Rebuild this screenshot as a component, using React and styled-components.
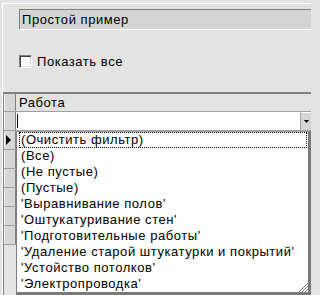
import React from "react";
import styled, { createGlobalStyle } from "styled-components";

const Global = createGlobalStyle`
  html, body { margin: 0; padding: 0; background: #e3e3e3; }
  body {
    font-family: "Liberation Sans", Arial, sans-serif;
    font-size: 13px;
    letter-spacing: 0.55px;
    color: #000;
  }
`;

const Screen = styled.div`
  position: relative;
  width: 311px;
  height: 295px;
  overflow: hidden;
  background: #e3e3e3;
  padding-top: 3px;
  padding-left: 2px;
  box-sizing: border-box;
`;

const Panel = styled.div`
  border-top: 1px solid #ffffff;
  border-left: 1px solid #ffffff;
  height: 100%;
  box-sizing: border-box;
  display: flex;
  flex-direction: column;
`;

const TitleBox = styled.div`
  margin: 5px 0 0 16px;
  height: 21px;
  box-sizing: border-box;
  border-top: 1px solid #808080;
  border-left: 1px solid #808080;
  border-bottom: 1px solid #ffffff;
  background: #d4d4d4;
  padding-left: 2px;
  line-height: 19px;
  white-space: nowrap;
`;

const CheckRow = styled.label`
  margin: 25px 0 0 16px;
  height: 13px;
  display: flex;
  align-items: center;
  gap: 5px;
  line-height: 13px;
`;

const CheckBox = styled.span`
  width: 13px;
  height: 13px;
  box-sizing: border-box;
  background: #ffffff;
  border-top: 1px solid #808080;
  border-left: 1px solid #808080;
  border-right: 1px solid #ffffff;
  border-bottom: 1px solid #ffffff;
  box-shadow: inset 1px 1px 0 #404040, inset -1px -1px 0 #dcdcdc;
`;

const Grid = styled.div`
  margin-top: 24px;
  flex: 1;
  border-top: 2px solid #808080;
  border-left: 1px solid #808080;
  display: flex;
  flex-direction: column;
`;

const Row = styled.div`
  display: flex;
  height: ${(p) => p.$h}px;
  box-sizing: border-box;
  border-bottom: 1px solid #a0a0a0;
  background: ${(p) => (p.$white ? "#ffffff" : "#e3e3e3")};
`;

const Indicator = styled.div`
  width: 12px;
  flex: none;
  box-sizing: border-box;
  background: #d6d6d6;
  border-left: 1px solid #f4f4f4;
  border-right: 1px solid #808080;
  display: flex;
  align-items: center;
  justify-content: flex-start;
  padding-left: 1px;
`;

const HeaderCell = styled.div`
  flex: 1;
  padding-left: 3px;
  line-height: 17px;
  white-space: nowrap;
`;

const FilterCell = styled.div`
  flex: 1;
  display: flex;
  align-items: center;
  background: #ffffff;
  padding-left: 1px;
`;

const Caret = styled.span`
  width: 1px;
  height: 14px;
  background: #000;
`;

const DropButton = styled.div`
  width: 11px;
  flex: none;
  margin: 1px 0 0 0;
  box-sizing: border-box;
  background: #d4d4d4;
  border-left: 1px solid #a0a0a0;
  display: flex;
  align-items: center;
  justify-content: center;
`;

const List = styled.div`
  position: absolute;
  left: 16px;
  top: 131px;
  right: 0;
  bottom: 0;
  box-sizing: border-box;
  background: #ffffff;
  border-top: 1px solid #a0a0a0;
  border-left: 1px solid #808080;
  border-right: 3px solid #7a7a7a;
  border-bottom: 3px solid #7a7a7a;
`;

const Item = styled.div`
  height: 16px;
  box-sizing: border-box;
  margin: 0 1px 0 2px;
  padding-left: 1px;
  border: 1px dotted ${(p) => (p.$focus ? "#000" : "transparent")};
  line-height: 14px;
  white-space: nowrap;
`;

const Grip = styled.svg`
  position: absolute;
  right: 0;
  bottom: 0;
`;

const items = [
  "(Очистить фильтр)",
  "(Все)",
  "(Не пустые)",
  "(Пустые)",
  "'Выравнивание полов'",
  "'Оштукатуривание стен'",
  "'Подготовительные работы'",
  "'Удаление старой штукатурки и покрытий'",
  "'Устойство потолков'",
  "'Электропроводка'",
];

export default function App() {
  return (
    <>
      <Global />
      <Screen>
        <Panel>
          <TitleBox>Простой пример</TitleBox>
          <CheckRow>
            <CheckBox />
            Показать все
          </CheckRow>
          <Grid>
            <Row $h={18}>
              <Indicator />
              <HeaderCell>Работа</HeaderCell>
            </Row>
            <Row $h={19} $white>
              <Indicator />
              <FilterCell>
                <Caret />
              </FilterCell>
              <DropButton>
                <svg width="5" height="3" viewBox="0 0 5 3">
                  <polygon points="0,0 5,0 2.5,3" fill="#000" />
                </svg>
              </DropButton>
            </Row>
            {[0, 1, 2, 3, 4, 5].map((i) => (
              <Row key={i} $h={19} $white>
                <Indicator>
                  {i === 0 && (
                    <svg width="6" height="10" viewBox="0 0 6 10">
                      <polygon points="0,0 5,5 0,10" fill="#000" />
                    </svg>
                  )}
                </Indicator>
              </Row>
            ))}
          </Grid>
        </Panel>
        <List>
          {items.map((t, i) => (
            <Item key={i} $focus={i === 0}>
              {t}
            </Item>
          ))}
          <Grip width="11" height="11" viewBox="0 0 11 11">
            {[2, 5, 8].map((o) => (
              <g key={o}>
                <line x1={11} y1={o} x2={o} y2={11} stroke="#808080" strokeWidth="1" />
                <line x1={11} y1={o + 1} x2={o + 1} y2={11} stroke="#ffffff" strokeWidth="1" />
              </g>
            ))}
          </Grip>
        </List>
      </Screen>
    </>
  );
}
